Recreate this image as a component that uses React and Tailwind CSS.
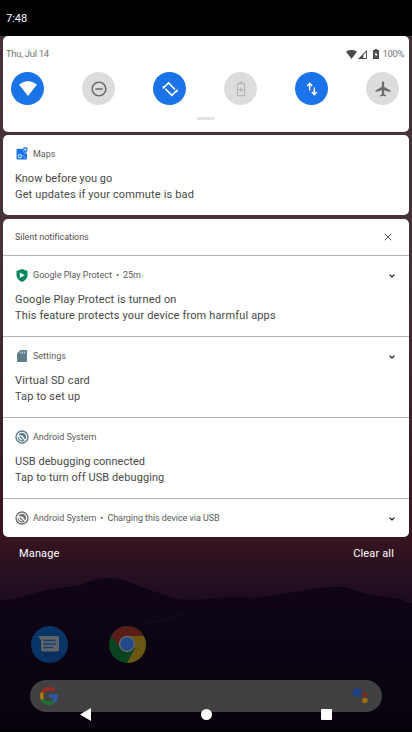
import React from 'react';

const MATERIAL = {
  dnd: 'M12 2C6.48 2 2 6.48 2 12s4.48 10 10 10 10-4.48 10-10S17.52 2 12 2zm0 18c-4.42 0-8-3.58-8-8s3.58-8 8-8 8 3.58 8 8-3.58 8-8 8zM7 11h10v2H7z',
  battery: 'M16 4h-2V2h-4v2H8c-.8 0-1.5.7-1.5 1.500v14.500c0 .8.7 1.500 1.500 1.500h8c.8 0 1.500-.7 1.500-1.500V5.500C17.500 4.700 16.800 4 16 4zm0 16H8V5.800h8V20zM11 16v-2H9v-2h2v-2h2v2h2v2h-2v2z',
  plane: 'M22 16v-2l-8.500-5V3.500C13.500 2.670 12.830 2 12 2s-1.500.67-1.500 1.500V9L2 14v2l8.500-2.500V19L8 20.500V22l4-1 4 1v-1.500L13.500 19v-5.500L22 16z',
};

function Glyph({ d, className }) {
  return (
    <svg viewBox="0 0 24 24" className={className} fill="currentColor">
      <path d={d} />
    </svg>
  );
}

function Tile({ on, children }) {
  return (
    <div className={'flex size-[33px] items-center justify-center rounded-full ' + (on ? 'bg-[#1a73e8] text-white' : 'bg-[#dcdcdc] text-[#6b6b6b]')}>
      {children}
    </div>
  );
}

function QuickSettings() {
  return (
    <section className="h-24 rounded-[5px] bg-white">
      <div className="flex h-9 items-center justify-between pl-[3px] pr-[5px] text-[9.5px] text-[#757575]">
        <span className="tracking-[-0.3px]">Thu, Jul 14</span>
        <div className="flex items-center text-[#4a4a4a]">
          <svg viewBox="0 0 11 9" className="h-[9px] w-[11px]" fill="currentColor"><path d="M0 1.500Q5.500-1.300 11 1.500L5.500 9z" /></svg>
          <svg viewBox="0 0 10 10" className="ml-px h-[9px] w-[9px]"><path d="M0 10L10 0V10z" fill="currentColor" /><path d="M6 5.500L9 2.500V9H6z" fill="#fff" /></svg>
          <svg viewBox="0 0 6 10" className="ml-[6px] h-[10px] w-[6px]"><path d="M0 1h2V0h2v1h2v9H0z" fill="currentColor" /><path d="M3.300 2.800L1.500 5.800h1.200V8.300L4.600 5H3.300z" fill="#fff" /></svg>
          <span className="ml-[3px] pt-px text-[9.5px] tracking-[-0.35px] text-[#757575]">100%</span>
        </div>
      </div>
      <div className="flex justify-between pl-2 pr-[10px]">
        <Tile on>
          <svg viewBox="0 0 18 15" className="h-[15px] w-[18px]" fill="currentColor"><path d="M0 3.600Q9-3.500 18 3.600L9 15z" /></svg>
        </Tile>
        <Tile><Glyph d={MATERIAL.dnd} className="size-[18px]" /></Tile>
        <Tile on>
          <svg viewBox="0 0 18 18" className="size-[18px]" fill="none" stroke="currentColor" strokeWidth="1.500">
            <path d="M3.500 6.800L7.500 2.900L14 9.500M14.800 11.500L10.800 15.400L4.300 8.800" />
            <path d="M16.600 8.800V12.300H13zM1.700 9.500V6H5.300z" fill="currentColor" stroke="none" />
          </svg>
        </Tile>
        <Tile><Glyph d={MATERIAL.battery} className="size-[18px] text-[#b5b5b5]" /></Tile>
        <Tile on>
          <svg viewBox="0 0 12 14" className="h-[14px] w-3" fill="none" stroke="currentColor" strokeWidth="1.500">
            <path d="M3.700 8.500V1.500M1.200 4L3.700 1.300L6.200 4M8.300 5.500V12.500M5.800 10L8.300 12.700L10.800 10" />
          </svg>
        </Tile>
        <Tile><Glyph d={MATERIAL.plane} className="size-[18px]" /></Tile>
      </div>
      <div className="mx-auto mt-3 h-[3px] w-[18px] rounded-full bg-[#e2e2e2]" />
    </section>
  );
}

function MapsIcon() {
  return (
    <svg viewBox="0 0 12 13" className="-mt-px h-[13px] w-3">
      <path d="M1.500 1.800H6.500Q6.800 4.500 9.200 7L11 6V11.500q0 1-1 1H1.500q-1 0-1-1V2.800q0-1 1-1z" fill="#1a73e8" />
      <circle cx="3.800" cy="9.200" r="1.700" fill="#1a73e8" stroke="#fff" strokeWidth=".9" />
      <path d="M6.500 8L10.500 12.300" stroke="#b9d4f8" strokeWidth=".6" />
      <path d="M9.300 6.900Q6.900 4 6.900 2.500A2.400 2.400 0 0 1 11.700 2.500Q11.700 4 9.300 6.900z" fill="#2f7de9" />
      <circle cx="9.300" cy="2.500" r="1" fill="#fff" />
    </svg>
  );
}

function ShieldIcon() {
  return (
    <svg viewBox="0.500 0 12 13" className="h-[13px] w-3">
      <path d="M6.500 0L12 2V6.500Q11.500 10.500 6.500 13Q1.500 10.500 1 6.500V2z" fill="#01875f" />
      <path d="M4.300 3.400L9.300 6.200L4.300 9z" fill="#fff" />
    </svg>
  );
}

function SdIcon() {
  return (
    <svg viewBox="0.500 0 12 12" className="size-3">
      <path d="M5 0h5.500q1 0 1 1v10q0 1-1 1H2.500q-1 0-1-1V3.500z" fill="#607d8b" />
      <path d="M5.300 1.500v2M7.100 1.500v2M8.900 1.500v2" stroke="#fff" strokeWidth=".7" />
    </svg>
  );
}

function SystemIcon({ className }) {
  return (
    <svg viewBox="0 0 14 14" className={'size-[14px] ' + className} fill="none" stroke="currentColor">
      <circle cx="7" cy="7" r="6" strokeWidth="1.400" />
      <path d="M3.300 5A4.200 4.200 0 0 1 10.400 4.500Q11.800 7 10.500 9.600L8.600 7.800Q8.800 5.700 6.600 5.600Q5 5 3.300 5z" fill="currentColor" stroke="none" />
      <path d="M3.200 7.200A3.900 3.900 0 0 0 8.300 10.700M4.800 6.500L9.300 11" strokeWidth="1.200" />
    </svg>
  );
}

function Chevron() {
  return (
    <svg viewBox="0 0 6 4" className="ml-auto mt-px h-1 w-[6px]" fill="none" stroke="#111" strokeWidth="1.200"><path d="M.6.600L3 3L5.400.600" /></svg>
  );
}

function Notification({ icon, app, extra, title, body, expandable, titleClass = '', bodyClass = '', className = '' }) {
  return (
    <article className={'pl-3 pr-[14.5px] ' + className}>
      <div className="flex h-[38px] items-center text-[9px] text-[#5a5a5a]">
        <span className="flex w-[14px] shrink-0 justify-center">{icon}</span>
        <span className="ml-1 whitespace-nowrap pt-[2px]">{app}</span>
        {extra && <><span className="w-[11px] pt-[2px] text-center">•</span><span className="whitespace-nowrap pt-[2px] tracking-[-0.05px]">{extra}</span></>}
        {expandable && <Chevron />}
      </div>
      {title && (
        <div className="-mt-0.5 whitespace-nowrap text-[11px] leading-4 tracking-[0.145px] text-[#484848]">
          <p className={titleClass}>{title}</p>
          <p className={bodyClass}>{body}</p>
        </div>
      )}
    </article>
  );
}

function HomeScreen() {
  return (
    <div className="absolute inset-0 flex flex-col bg-gradient-to-b from-[#46303a] from-35% via-[#35141f] via-74% to-[#1b0a22] to-83%">
      <svg viewBox="0 0 412 732" className="absolute inset-0 size-full">
        <defs>
          <linearGradient id="hill" x1="0" y1="0" x2="0" y2="1">
            <stop offset="0" stopColor="#0f0518" />
            <stop offset="1" stopColor="#09020c" />
          </linearGradient>
        </defs>
        <path d="M0 600Q12 600 25 596Q50 588 65 587Q77 587 83 584Q98 577 110 578Q122 578 134 584Q155 592 174 598Q184 601 206 599Q240 595 250 598Q285 594 312 589Q325 586 346 587Q358 591 370 595Q392 596 412 602V732H0z" fill="url(#hill)" />
        <path d="M140 624Q172 619 188 612" stroke="#170d22" fill="none" />
        <path d="M402 600L412 601V603z" fill="#21142a" />
      </svg>
      <div className="relative mt-[626px] flex gap-[41px] pl-[31px]">
        <svg viewBox="0 0 37 37" className="size-[37px]">
          <circle cx="18.500" cy="18.500" r="18.500" fill="#0a3568" />
          <path d="M9 12L17 26L27 26L34 28A18.500 18.500 0 0 1 18 37L10 25z" fill="#082b57" opacity=".5" />
          <path d="M7 10H26Q28 10 28 12V23.500Q28 25.500 26 25.500H12Q10 25.500 10 23.500V14z" fill="#606467" />
          <path d="M12.500 14.500H25M12.500 18H25M12.500 21.500H22" stroke="#173f70" strokeWidth="1.600" />
        </svg>
        <svg viewBox="0 0 37 37" className="size-[37px]">
          <circle cx="18.500" cy="18.500" r="18.500" fill="#08421f" />
          <path d="M2.500 9.500A18.500 18.500 0 0 1 34.700 10H18.500L11 22.500z" fill="#5b1d17" />
          <path d="M18.500 10H34.900A18.500 18.500 0 0 1 18 37L26 22.500z" fill="#6b5713" />
          <circle cx="18" cy="18" r="8.200" fill="#666" />
          <circle cx="18" cy="18" r="6.800" fill="#23498a" />
        </svg>
      </div>
      <div className="relative mx-[30px] mt-[17px] flex h-8 items-center justify-between rounded-full bg-[#414042] pl-[10px] pr-3">
        <svg viewBox="0 0 18 18" className="size-[18px]" fill="none" strokeWidth="3.400">
          <path d="M14.200 3.800A7.300 7.300 0 0 0 2.600 5.500" stroke="#9c2b20" />
          <path d="M2.600 5.500A7.300 7.300 0 0 0 2.600 12.500" stroke="#a87b08" />
          <path d="M2.600 12.500A7.300 7.300 0 0 0 13.600 14.600" stroke="#1c7336" />
          <path d="M9.200 9H16.200Q16.200 12.500 13.500 14.700" stroke="#2b59a5" />
        </svg>
        <svg viewBox="0 0 18 18" className="size-[18px]">
          <circle cx="5.200" cy="5.500" r="4.500" fill="#1d4080" />
          <circle cx="12.800" cy="7.700" r="2.200" fill="#85251c" />
          <circle cx="12.900" cy="13.500" r="2.800" fill="#96700a" />
          <circle cx="16" cy="5.200" r="1.100" fill="#166331" />
        </svg>
      </div>
      <div className="relative mt-auto h-0.5 bg-black" />
    </div>
  );
}

export default function App() {
  return (
    <div className="relative h-[732px] w-[412px] overflow-hidden bg-black font-['Roboto',sans-serif]">
      <HomeScreen />
      <div className="relative flex h-full flex-col">
        <header className="flex h-9 items-center bg-black pl-[6px] pt-[2px] text-[11px] text-white">
          <span>7:48</span>
        </header>
        <main className="px-[3px]">
          <QuickSettings />
          <section className="mt-[3px] h-20 rounded-[5px] bg-white">
            <Notification icon={<MapsIcon />} app="Maps" title="Know before you go" titleClass="tracking-[0.01px]" body="Get updates if your commute is bad" />
          </section>
          <section className="mt-1 h-[318px] divide-y divide-[#b4b4b4] overflow-hidden rounded-[5px] bg-white">
            <div className="flex h-[37px] items-center justify-between pl-3 pr-[17px] text-[9px] text-[#505050]">
              <h2 className="pt-[2px] tracking-[-0.05px]">Silent notifications</h2>
              <svg viewBox="0 0 8 8" className="size-2" stroke="#555" strokeWidth="1"><path d="M.8.800L7.200 7.200M7.200.800L.8 7.200" /></svg>
            </div>
            <Notification className="h-[81px]" icon={<ShieldIcon />} app="Google Play Protect" extra="25m" title="Google Play Protect is turned on" body="This feature protects your device from harmful apps" expandable />
            <Notification className="h-[81px]" icon={<SdIcon />} app="Settings" title="Virtual SD card" body="Tap to set up" expandable />
            <Notification className="h-[81px]" icon={<SystemIcon className="text-[#607d8b]" />} app="Android System" title="USB debugging connected" titleClass="tracking-[0.05px]" body="Tap to turn off USB debugging" bodyClass="tracking-[0.08px]" />
            <Notification icon={<SystemIcon className="text-[#757575]" />} app="Android System" extra="Charging this device via USB" expandable />
          </section>
        </main>
        <div className="flex h-[34px] items-center justify-between pl-[19px] pr-[18px] text-[11px] font-normal tracking-[0.15px] text-white">
          <button>Manage</button>
          <button>Clear all</button>
        </div>
        <nav className="mt-auto flex h-9 items-center justify-between pl-20 pr-20 text-white">
          <svg viewBox="0 0 11 13" className="h-[13px] w-[11px]" fill="currentColor"><path d="M0 6.500L11 0V13z" /></svg>
          <span className="size-[11px] rounded-full bg-white" />
          <span className="size-[11px] rounded-[1px] bg-white" />
        </nav>
      </div>
    </div>
  );
}
